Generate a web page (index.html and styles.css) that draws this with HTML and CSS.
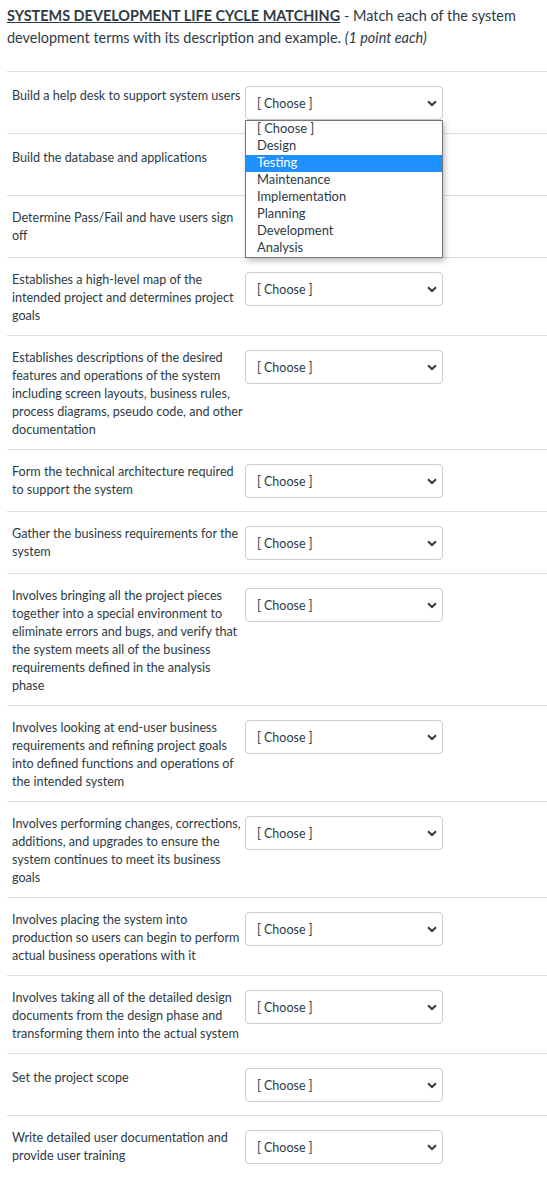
FILE: index.html
```html
<!DOCTYPE html>
<html lang="en">
<head>
<meta charset="utf-8">
<title>Matching</title>
<link rel="stylesheet" href="styles.css">
</head>
<body>
<div class="page">
  <div class="question-text">
    <span class="title">SYSTEMS DEVELOPMENT LIFE CYCLE MATCHING</span> - Match each of the system development terms with its description and example. <em>(1 point each)</em>
  </div>
  <div class="answers">
    <div class="row">
      <div class="label single">Build a help desk to support system users</div>
      <div class="select-wrap">
        <div class="select open"><span>[ Choose ]</span><svg class="chev" viewBox="0 0 10 7" width="10" height="7"><path d="M1 1.2 L5 5 L9 1.2" fill="none" stroke="#2d3b45" stroke-width="2"/></svg></div>
        <ul class="dropdown">
          <li>[ Choose ]</li>
          <li>Design</li>
          <li class="hl">Testing</li>
          <li>Maintenance</li>
          <li>Implementation</li>
          <li>Planning</li>
          <li>Development</li>
          <li>Analysis</li>
        </ul>
      </div>
    </div>
    <div class="row">
      <div class="label single">Build the database and applications</div>
      <div class="select-wrap"><div class="select"><span>[ Choose ]</span><svg class="chev" viewBox="0 0 10 7" width="10" height="7"><path d="M1 1.2 L5 5 L9 1.2" fill="none" stroke="#2d3b45" stroke-width="2"/></svg></div></div>
    </div>
    <div class="row">
      <div class="label">Determine Pass/Fail and have users sign off</div>
      <div class="select-wrap"><div class="select"><span>[ Choose ]</span><svg class="chev" viewBox="0 0 10 7" width="10" height="7"><path d="M1 1.2 L5 5 L9 1.2" fill="none" stroke="#2d3b45" stroke-width="2"/></svg></div></div>
    </div>
    <div class="row">
      <div class="label">Establishes a high-level map of the intended project and determines project goals</div>
      <div class="select-wrap"><div class="select"><span>[ Choose ]</span><svg class="chev" viewBox="0 0 10 7" width="10" height="7"><path d="M1 1.2 L5 5 L9 1.2" fill="none" stroke="#2d3b45" stroke-width="2"/></svg></div></div>
    </div>
    <div class="row">
      <div class="label">Establishes descriptions of the desired features and operations of the system including screen layouts, business rules, process diagrams, pseudo code, and other documentation</div>
      <div class="select-wrap"><div class="select"><span>[ Choose ]</span><svg class="chev" viewBox="0 0 10 7" width="10" height="7"><path d="M1 1.2 L5 5 L9 1.2" fill="none" stroke="#2d3b45" stroke-width="2"/></svg></div></div>
    </div>
    <div class="row">
      <div class="label">Form the technical architecture required to support the system</div>
      <div class="select-wrap"><div class="select"><span>[ Choose ]</span><svg class="chev" viewBox="0 0 10 7" width="10" height="7"><path d="M1 1.2 L5 5 L9 1.2" fill="none" stroke="#2d3b45" stroke-width="2"/></svg></div></div>
    </div>
    <div class="row">
      <div class="label">Gather the business requirements for the system</div>
      <div class="select-wrap"><div class="select"><span>[ Choose ]</span><svg class="chev" viewBox="0 0 10 7" width="10" height="7"><path d="M1 1.2 L5 5 L9 1.2" fill="none" stroke="#2d3b45" stroke-width="2"/></svg></div></div>
    </div>
    <div class="row">
      <div class="label">Involves bringing all the project pieces together into a special environment to eliminate errors and bugs, and verify that the system meets all of the business requirements defined in the analysis phase</div>
      <div class="select-wrap"><div class="select"><span>[ Choose ]</span><svg class="chev" viewBox="0 0 10 7" width="10" height="7"><path d="M1 1.2 L5 5 L9 1.2" fill="none" stroke="#2d3b45" stroke-width="2"/></svg></div></div>
    </div>
    <div class="row">
      <div class="label">Involves looking at end-user business requirements and refining project goals into defined functions and operations of the intended system</div>
      <div class="select-wrap"><div class="select"><span>[ Choose ]</span><svg class="chev" viewBox="0 0 10 7" width="10" height="7"><path d="M1 1.2 L5 5 L9 1.2" fill="none" stroke="#2d3b45" stroke-width="2"/></svg></div></div>
    </div>
    <div class="row">
      <div class="label">Involves performing changes, corrections, additions, and upgrades to ensure the system continues to meet its business goals</div>
      <div class="select-wrap"><div class="select"><span>[ Choose ]</span><svg class="chev" viewBox="0 0 10 7" width="10" height="7"><path d="M1 1.2 L5 5 L9 1.2" fill="none" stroke="#2d3b45" stroke-width="2"/></svg></div></div>
    </div>
    <div class="row">
      <div class="label">Involves placing the system into production so users can begin to perform actual business operations with it</div>
      <div class="select-wrap"><div class="select"><span>[ Choose ]</span><svg class="chev" viewBox="0 0 10 7" width="10" height="7"><path d="M1 1.2 L5 5 L9 1.2" fill="none" stroke="#2d3b45" stroke-width="2"/></svg></div></div>
    </div>
    <div class="row">
      <div class="label">Involves taking all of the detailed design documents from the design phase and transforming them into the actual system</div>
      <div class="select-wrap"><div class="select"><span>[ Choose ]</span><svg class="chev" viewBox="0 0 10 7" width="10" height="7"><path d="M1 1.2 L5 5 L9 1.2" fill="none" stroke="#2d3b45" stroke-width="2"/></svg></div></div>
    </div>
    <div class="row">
      <div class="label single">Set the project scope</div>
      <div class="select-wrap"><div class="select"><span>[ Choose ]</span><svg class="chev" viewBox="0 0 10 7" width="10" height="7"><path d="M1 1.2 L5 5 L9 1.2" fill="none" stroke="#2d3b45" stroke-width="2"/></svg></div></div>
    </div>
    <div class="row">
      <div class="label">Write detailed user documentation and provide user training</div>
      <div class="select-wrap"><div class="select"><span>[ Choose ]</span><svg class="chev" viewBox="0 0 10 7" width="10" height="7"><path d="M1 1.2 L5 5 L9 1.2" fill="none" stroke="#2d3b45" stroke-width="2"/></svg></div></div>
    </div>
  </div>
</div>
</body>
</html>
```

FILE: styles.css
```css
html, body {
  margin: 0;
  padding: 0;
  background: #ffffff;
}
body {
  font-family: Lato, "Liberation Sans", sans-serif;
  color: #2d3b45;
  font-size: 12.6px;
}
.page {
  padding-left: 7px;
  overflow: hidden;
}
.question-text {
  font-size: 14.45px;
  line-height: 22px;
  padding-top: 5px;
  padding-right: 8px;
  height: 71px;
  box-sizing: border-box;
}
.title {
  font-weight: bold;
  text-decoration: underline;
}
.answers {
  margin-right: -20px;
}
.row {
  display: flex;
  align-items: flex-start;
  border-top: 1px solid #dcdfe1;
  padding: 13px 0 10px 5px;
}
.label {
  width: 232px;
  flex: none;
  line-height: 18px;
  font-size: 12.6px;
}
.label.single {
  padding-top: 2px;
}
.select-wrap {
  position: relative;
  margin: 1px 0 3px 1px;
}
.select {
  width: 198px;
  height: 34px;
  box-sizing: border-box;
  border: 1px solid #c7cdd1;
  border-radius: 4px;
  background: #ffffff;
  display: flex;
  align-items: center;
  justify-content: space-between;
  padding: 0 5px 0 11px;
  font-size: 12.5px;
}
.chev {
  display: block;
}
.dropdown {
  position: absolute;
  left: 0;
  top: 34px;
  width: 198px;
  box-sizing: border-box;
  margin: 0;
  padding: 0;
  list-style: none;
  background: #ffffff;
  border: 1px solid #767676;
  box-shadow: 2px 3px 6px rgba(0, 0, 0, 0.25);
  z-index: 5;
}
.dropdown li {
  height: 17px;
  line-height: 15px;
  padding-left: 11px;
  font-size: 12.9px;
}
.dropdown li.hl {
  background: #1e90ff;
  color: #ffffff;
}
```
